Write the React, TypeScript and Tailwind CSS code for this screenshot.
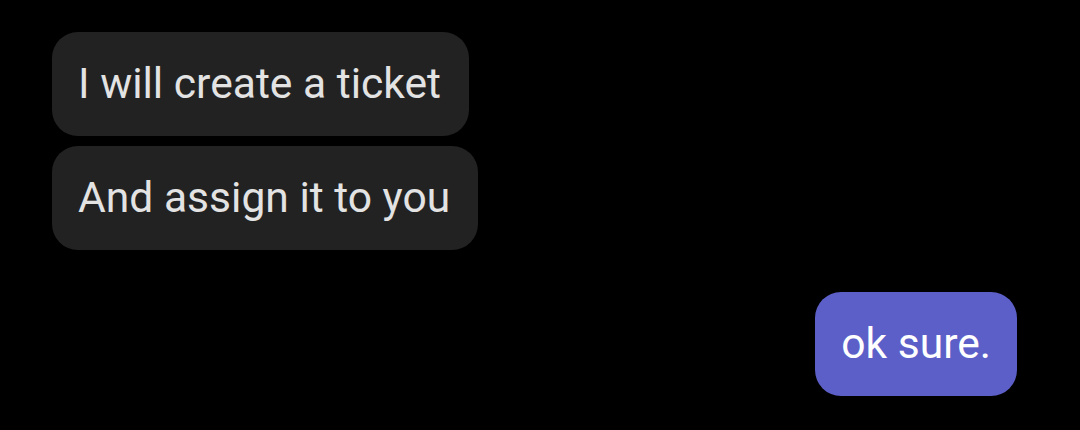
const incoming = ["I will create a ticket", "And assign it to you"];

export default function App() {
  return (
    <div className="h-[430px] w-[1080px] bg-black font-['Roboto',sans-serif] text-[42.6px] leading-[52px]">
      <div className="flex flex-col items-start gap-[10px] pl-[52px] pt-[32px]">
        {incoming.map((m) => (
          <div key={m} className="rounded-[26px] bg-[#222222] pb-[27px] pl-[26px] pr-[28px] pt-[25px] text-[#e3e3e3]">
            {m}
          </div>
        ))}
      </div>
      <div className="mt-[42px] flex justify-end pr-[63px]">
        <div className="rounded-[26px] bg-[#5c5fc8] px-[26px] pb-[27px] pt-[25px] text-white">ok sure.</div>
      </div>
    </div>
  );
}
